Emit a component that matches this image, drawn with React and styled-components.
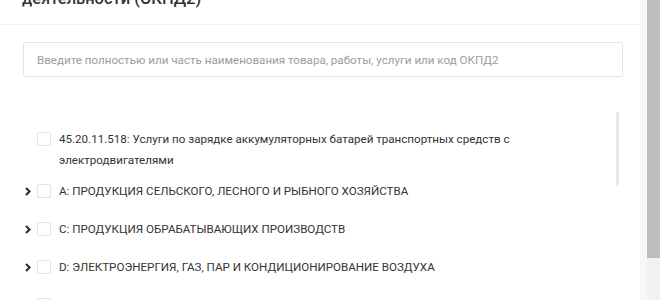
import React from "react";
import styled, { createGlobalStyle } from "styled-components";

const Global = createGlobalStyle`
  html, body { margin: 0; padding: 0; overflow: hidden; }
  body { font-family: Roboto, "Liberation Sans", Arial, sans-serif; }
  * { box-sizing: border-box; }
`;

const Viewport = styled.div`
  width: 660px;
  height: 300px;
  display: grid;
  grid-template-columns: 640px 7px 13px;
  overflow: hidden;
  background: #f6f6f6;
`;

const Panel = styled.div`
  height: 349px;
  background: #ffffff;
`;

const Gutter = styled.div`
  background: #f7f7f7;
`;

const ScrollTrack = styled.div`
  height: 300px;
  background: #f1f1f1;
  display: flex;
  flex-direction: column;
`;

const ScrollHandle = styled.div`
  flex: none;
  width: 13px;
  height: ${(p) => p.$size}px;
  background: #bdbdbd;
`;

const Header = styled.div`
  height: 25px;
  padding: 0 22px 15px;
  display: flex;
  align-items: flex-end;
  overflow: hidden;
  border-bottom: 1px solid #f0f0f0;
`;

const Title = styled.h2`
  margin: 0;
  font-size: 16.5px;
  line-height: 20px;
  font-weight: 500;
  color: #333333;
  white-space: nowrap;
`;

const Body = styled.div`
  padding: 17px 17px 0 23px;
`;

const SearchInput = styled.input`
  display: block;
  width: 100%;
  height: 35px;
  border: 1px solid #e4e4e4;
  border-radius: 2px;
  padding: 0 13px;
  font-family: Roboto, "Liberation Sans", Arial, sans-serif;
  font-size: 11.6px;
  color: #333;
  outline: none;
  &::placeholder { color: #9c9c9c; }
`;

const List = styled.div`
  position: relative;
  margin-top: 35px;
  padding: 8px 30px 0 0;
`;

const ListThumb = styled.div`
  position: absolute;
  top: 0;
  right: 4px;
  width: 3px;
  height: 74px;
  border-radius: 2px;
  background: #e8e8e8;
`;

const Row = styled.div`
  display: flex;
  align-items: flex-start;
  padding: ${(p) => (p.$first ? "9px 0 2px" : "8px 0 9px")};
`;

const Toggle = styled.div`
  width: 14px;
  height: 21px;
  flex: none;
  display: flex;
  align-items: center;
  padding-left: 2px;
  color: #333;
`;

const Check = styled.span`
  width: 14px;
  height: 14px;
  flex: none;
  margin-top: 3px;
  border: 1px solid #e2e2e2;
  border-radius: 2px;
  background: #fff;
`;

const Label = styled.div`
  flex: 1;
  margin-left: 8px;
  font-size: 11.6px;
  line-height: 21px;
  color: #333333;
`;

const Chevron = () => (
  <svg width="6" height="9" viewBox="0 0 6 9">
    <polyline points="1,1 4.6,4.5 1,8" fill="none" stroke="#2b2b2b" strokeWidth="2" strokeLinejoin="miter" />
  </svg>
);

const items = [
  { text: "45.20.11.518: Услуги по зарядке аккумуляторных батарей транспортных средств с электродвигателями", expandable: false },
  { text: "A: ПРОДУКЦИЯ СЕЛЬСКОГО, ЛЕСНОГО И РЫБНОГО ХОЗЯЙСТВА", expandable: true },
  { text: "C: ПРОДУКЦИЯ ОБРАБАТЫВАЮЩИХ ПРОИЗВОДСТВ", expandable: true },
  { text: "D: ЭЛЕКТРОЭНЕРГИЯ, ГАЗ, ПАР И КОНДИЦИОНИРОВАНИЕ ВОЗДУХА", expandable: true },
  { text: "E: ВОДОСНАБЖЕНИЕ; ВОДООТВЕДЕНИЕ, УСЛУГИ ПО УДАЛЕНИЮ И РЕКУЛЬТИВАЦИИ ОТХОДОВ", expandable: true },
];

export default function App() {
  return (
    <>
      <Global />
      <Viewport>
        <Panel>
          <Header>
            <Title>
              Общероссийский классификатор продукции по видам экономической
              <br />
              деятельности (ОКПД2)
            </Title>
          </Header>
          <Body>
            <SearchInput placeholder="Введите полностью или часть наименования товара, работы, услуги или код ОКПД2" />
            <List>
              <ListThumb />
              {items.map((it, i) => (
                <Row key={i} $first={i === 0}>
                  <Toggle>{it.expandable && <Chevron />}</Toggle>
                  <Check />
                  <Label>{it.text}</Label>
                </Row>
              ))}
            </List>
          </Body>
        </Panel>
        <Gutter />
        <ScrollTrack>
          <ScrollHandle $size={258} />
        </ScrollTrack>
      </Viewport>
    </>
  );
}
